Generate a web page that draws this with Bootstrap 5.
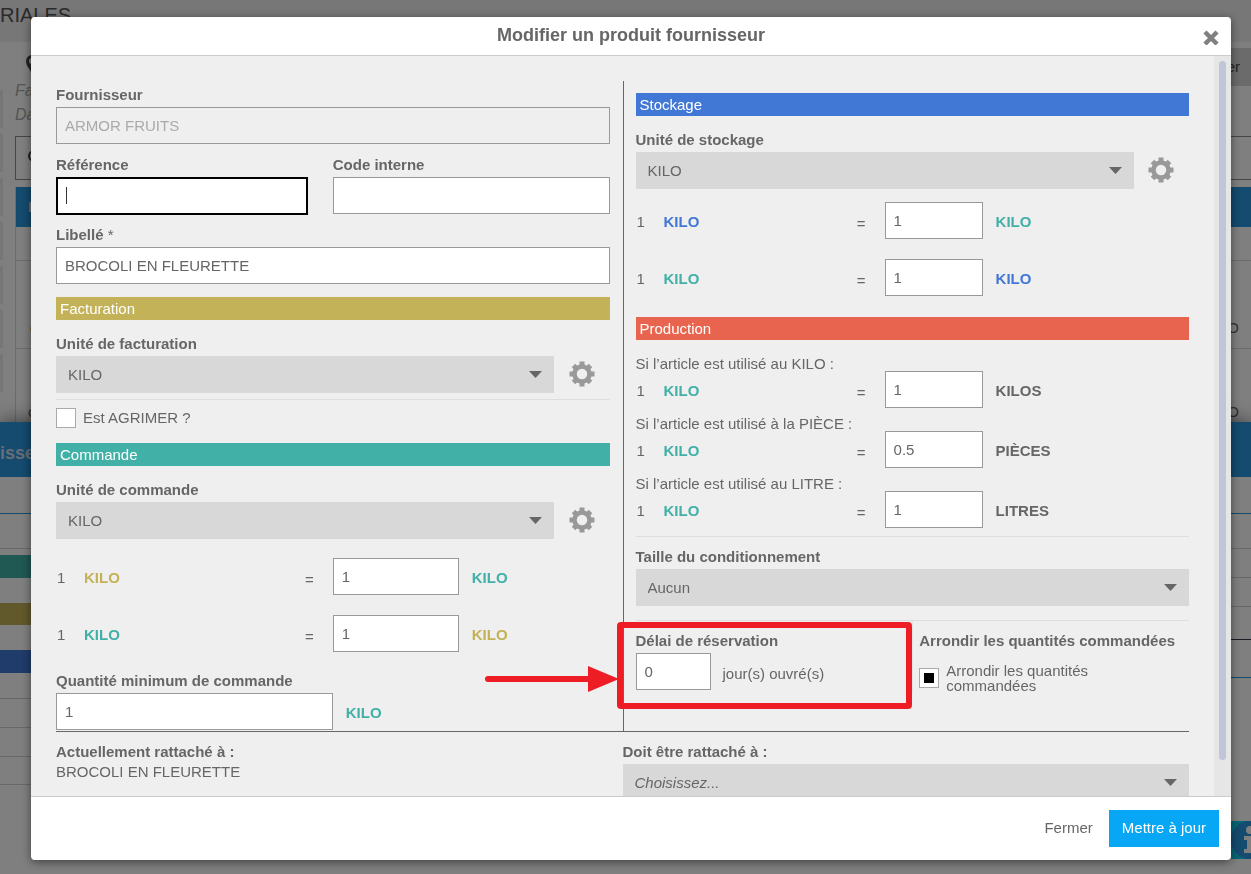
<!DOCTYPE html>
<html lang="fr">
<head>
<meta charset="utf-8">
<meta name="viewport" content="width=device-width, initial-scale=1">
<title>Modifier un produit fournisseur</title>
<link rel="stylesheet" href="https://cdn.jsdelivr.net/npm/bootstrap@5.3.0/dist/css/bootstrap.min.css">
<style>
  :root { --ink:#666; --gold:#c3b257; --teal:#41b1a8; --blue:#4178d6; --coral:#e9644e; --sky:#2896dc; }
  body { font-family:"Liberation Sans", Arial, sans-serif; font-size:15px; line-height:20px; color:var(--ink); }

  /* Page behind the dialog */
  .bg-page { height:100vh; overflow:hidden; background:#fff; }
  .bg-top { height:42px; background:#efefef; font-size:20px; line-height:30px; color:#555; }
  .bg-rail { width:3px; padding-top:48px; gap:6px; }
  .bg-rail span { height:38px; background:#ececec; }
  .bg-list { padding-left:12px; height:380px; }
  .bg-intro { font-style:italic; font-size:16px; line-height:24px; color:#aaa; }
  .bg-pin { height:37px; padding:12px 0 0 10px; }
  .bg-action { background:#d6d6d6; height:38px; margin-top:6px; padding:0 11px 0 16px; color:#444; }
  .bg-search { height:44px; margin:9px 0 7px; border:1px solid #8c8c8c; border-right:0; padding-left:11px; }
  .bg-grid { border-left:1px solid #d8d8d8; }
  .bg-grid-head { height:40px; background:var(--sky); color:#fff; padding-left:12px; }
  .bg-line { border-bottom:1px solid #d8d8d8; padding:0 12px 10px 14px; }
  .bg-sheet { box-shadow:0 0 20px rgba(0,0,0,.6); background:#fff; height:100%; }
  .bg-sheet-head { height:55px; background:var(--sky); font-size:18px; color:#c8dcec; padding-top:6px; }
  .bg-side { width:32px; }
  .bg-rule { border-bottom:1px solid #d0d0d0; }
  .bg-rule.accent { border-color:var(--sky); }
  .bg-rule.dark { border-color:#333c48; }
  .bg-info { position:absolute; right:-18px; bottom:15px; }

  /* Dialog */
  .shade { position:fixed; inset:0; background:rgba(0,0,0,.5); padding:17px 20px 14px 31px; }
  .dialog { background:#fff; border-radius:4px; box-shadow:0 2px 10px rgba(0,0,0,.5); overflow:hidden; }
  .dialog-head { height:39px; border-bottom:1px solid #ccc; }
  .dialog-head h1 { font-size:18px; line-height:36px; font-weight:700; color:var(--ink); }
  .close-x { width:20px; height:39px; margin-right:10px; }
  .dialog-body { min-height:0; background:#efefef; }
  .scroll-pane { min-height:0; overflow:hidden; padding:25px 25px 0; }
  .rail { width:17px; background:#e6e6e6; padding:5px 5px 36px; }
  .rail span { width:7px; background:#c0c5d7; border-radius:4px; }
  .dialog-foot { height:64px; border-top:1px solid #ccc; padding:0 12px 0 0; gap:3px; }

  .col-start { padding-right:13px; }
  .col-end { border-left:1px solid var(--ink); padding:12px 0 38px 12px; }
  .lbl { display:block; font-weight:700; line-height:20px; padding:4px 0 2px; white-space:nowrap; }
  .box { display:block; height:37px; border:1px solid #999; border-radius:0; padding:0 8px; background:#fff; color:var(--ink); min-width:0; }
  .box:disabled { background:#efefef; color:#aaa; }
  .box.active { border:2px solid #000; outline:0; height:38px; background:linear-gradient(#333,#333) 8px 8px / 1px 17px no-repeat #fff; }
  .pick { display:block; height:37px; border:0; border-radius:0; padding:0 36px 0 12px; color:var(--ink); appearance:none;
    background:#d8d8d8 url("data:image/svg+xml,%3Csvg xmlns='http://www.w3.org/2000/svg' width='13' height='7'%3E%3Cpath d='M0 0H13L6.500 7Z' fill='%23666'/%3E%3C/svg%3E") right 12px top 15px no-repeat; }
  .pick-90 { width:90%; }
  .gear { width:10%; padding:0; }
  .gear svg { display:block; margin:0 auto 1px; }
  .band { height:23px; line-height:23px; padding-left:4px; font-size:15px; font-weight:400; color:#fff; margin:0; }
  .thin { border-top:1px solid #dedede; }
  .mt-stack { margin-top:7px; }
  .mt-band { margin-top:13px; }
  .after-band { margin-top:10px; }
  .conv { height:37px; }
  .conv > * { flex:none; }
  .conv .from { width:50%; padding:5px 19px 0 1px; }
  .col-end .conv .from { width:45%; }
  .conv .one { width:27px; }
  .conv .box { width:126px; }
  .col-end .conv .box { width:98px; }
  .unit { font-weight:700; padding:3px 0 0 13px; }
  .from b { flex:1; }
  .from i { font-style:normal; padding-top:2px; }
  .conv-gap { margin-top:20px; }
  .hint { line-height:15px; margin:8px 0 0; }
  .tick { appearance:none; width:20px; height:20px; border:1px solid #aaa; background:#fff; margin:0; flex:none; }
  .tick:checked { background:linear-gradient(#000,#000) center / 10px 10px no-repeat #fff; }
  .c-gold { color:var(--gold); } .c-teal { color:var(--teal); } .c-blue { color:var(--blue); }
  .b-gold { background:var(--gold); } .b-teal { background:var(--teal); } .b-blue { background:var(--blue); } .b-coral { background:var(--coral); }
  .delay { position:relative; width:50%; padding-top:6px; }
  .delay .box { width:75px; }
  .round { width:50%; padding:6px 0 0 6px; border-left:1px solid #e4e4e4; }
  .frame { position:absolute; left:-19px; right:0; top:1px; height:87px; border:6px solid #ee1c25; border-radius:4px; pointer-events:none; }
  .arrow { position:absolute; right:100%; top:38px; margin-right:4px; }
  .attach { border-top:1px solid var(--ink); padding-top:6px; }
  .btn-flat { height:37px; border-radius:0; font-size:15px; padding:0 13px; color:var(--ink); }
  .btn-send, .btn-send:hover { background:#08a7f5; color:#fff; }
</style>
</head>
<body class="overflow-hidden">

<div class="bg-page d-flex flex-column position-relative" aria-hidden="true">
  <div class="bg-top flex-shrink-0">RIALES</div>
  <div class="d-flex flex-shrink-0">
    <div class="bg-rail d-flex flex-column"><span></span><span></span><span></span><span></span><span></span><span></span><span></span></div>
    <div class="bg-list flex-grow-1 d-flex flex-column">
      <div class="d-flex justify-content-between align-items-start">
        <div class="bg-intro">
          <div class="bg-pin"><svg class="d-block" width="14" height="21" viewBox="0 0 14 21"><path d="M7 1a6 6 0 0 0-6 6c0 5 4 8 6 13 2-5 6-8 6-13a6 6 0 0 0-6-6z" fill="#444"/><circle cx="7" cy="7" r="3" fill="#fff"/></svg></div>
          <div>Fa</div><div>Da</div>
        </div>
        <div class="bg-action d-flex align-items-center">er</div>
      </div>
      <div class="bg-search d-flex align-items-center"><svg width="16" height="16" viewBox="0 0 16 16"><circle cx="7" cy="6" r="5" fill="none" stroke="#444" stroke-width="2"/><path d="M10 10l5 5" stroke="#444" stroke-width="2"/></svg></div>
      <div class="bg-grid flex-grow-1 d-flex flex-column">
        <div class="bg-grid-head d-flex align-items-center">I</div>
        <div class="bg-line" style="height:34px"></div>
        <div class="bg-line d-flex align-items-end justify-content-between" style="height:88px"><span>c</span><span>O</span></div>
        <div class="d-flex align-items-end justify-content-between px-2 flex-grow-1"><span class="ps-1">c</span><span class="pe-1">O</span></div>
      </div>
    </div>
  </div>
  <div class="bg-sheet flex-grow-1 position-relative">
    <div class="bg-sheet-head d-flex align-items-center fw-bold">isse</div>
    <div class="d-flex justify-content-between">
      <div class="bg-side">
        <div class="bg-rule accent" style="height:37px"></div>
        <div class="bg-rule" style="height:35px"></div>
        <div class="b-teal" style="height:23px;margin-top:6px"></div>
        <div class="b-gold" style="height:22px;margin-top:25px"></div>
        <div class="b-blue" style="height:23px;margin-top:25px"></div>
        <div class="bg-rule" style="height:26px"></div>
        <div class="bg-rule" style="height:29px"></div>
        <div class="bg-rule" style="height:29px"></div>
        <div class="bg-rule" style="height:28px"></div>
      </div>
      <div class="bg-side">
        <div class="bg-rule accent" style="height:37px"></div>
        <div class="bg-rule" style="height:35px"></div>
        <div class="bg-rule" style="height:29px"></div>
        <div class="bg-rule" style="height:29px"></div>
        <div class="bg-rule dark" style="height:33px"></div>
        <div class="bg-rule accent" style="height:38px"></div>
      </div>
    </div>
    <svg class="bg-info" width="38" height="38" viewBox="0 0 38 38"><circle cx="19" cy="19" r="19" fill="#2896dc"/><circle cx="19" cy="9" r="4" fill="#fff"/><path d="M13 15h9v13h3v4H13v-4h3v-9h-3z" fill="#fff"/></svg>
  </div>
</div>

<div class="shade d-flex">
  <div class="dialog d-flex flex-column flex-grow-1" role="dialog" aria-labelledby="dlg-title">
    <div class="dialog-head d-flex flex-shrink-0 position-relative justify-content-end">
      <h1 id="dlg-title" class="position-absolute w-100 text-center m-0">Modifier un produit fournisseur</h1>
      <button type="button" class="close-x btn p-0 border-0 position-relative d-flex align-items-center justify-content-center" aria-label="Fermer la fenêtre">
        <svg width="16" height="16" viewBox="0 0 16 16"><path d="M3.500 4.500l9 9m0-9l-9 9" stroke="#808080" stroke-width="4.400" stroke-linecap="square"/></svg>
      </button>
    </div>

    <form class="dialog-body d-flex flex-grow-1" id="product">
      <div class="scroll-pane flex-grow-1">
        <div class="row g-0">
          <div class="col-6 col-start">
            <label class="lbl" for="supplier">Fournisseur</label>
            <input class="box w-100" id="supplier" value="ARMOR FRUITS" disabled>
            <div class="d-flex mt-stack">
              <div class="w-50" style="padding-right:25px">
                <label class="lbl" for="ref">Référence</label>
                <input class="box active w-100" id="ref">
              </div>
              <div class="w-50">
                <label class="lbl" for="code">Code interne</label>
                <input class="box w-100" id="code">
              </div>
            </div>
            <label class="lbl" style="margin-top:6px" for="name">Libellé <span class="fw-normal">*</span></label>
            <input class="box w-100" id="name" value="BROCOLI EN FLEURETTE">

            <h2 class="band b-gold mt-band">Facturation</h2>
            <label class="lbl after-band" for="bill">Unité de facturation</label>
            <div class="d-flex">
              <select class="pick pick-90" id="bill"><option>KILO</option></select>
              <button type="button" class="gear btn border-0" aria-label="Paramètres"><svg width="26" height="26"><use href="#cog"/></svg></button>
            </div>
            <div class="thin d-flex align-items-center" style="margin-top:6px;padding-top:8px;gap:7px">
              <input class="tick" type="checkbox" id="agri"><label for="agri">Est AGRIMER ?</label>
            </div>

            <h2 class="band b-teal" style="margin-top:15px">Commande</h2>
            <label class="lbl after-band" for="order">Unité de commande</label>
            <div class="d-flex">
              <select class="pick pick-90" id="order"><option>KILO</option></select>
              <button type="button" class="gear btn border-0" aria-label="Paramètres"><svg width="26" height="26"><use href="#cog"/></svg></button>
            </div>
            <div class="conv d-flex align-items-center" style="margin-top:19px">
              <div class="from d-flex"><span class="one">1</span><b class="c-gold">KILO</b><i>=</i></div>
              <input class="box" value="1" aria-label="Commande par facturation"><span class="unit c-teal">KILO</span>
            </div>
            <div class="conv conv-gap d-flex align-items-center">
              <div class="from d-flex"><span class="one">1</span><b class="c-teal">KILO</b><i>=</i></div>
              <input class="box" value="1" aria-label="Facturation par commande"><span class="unit c-gold">KILO</span>
            </div>
            <label class="lbl" style="margin-top:15px" for="minq">Quantité minimum de commande</label>
            <div class="d-flex align-items-center">
              <input class="box w-50" id="minq" value="1"><span class="unit c-teal">KILO</span>
            </div>
          </div>

          <div class="col-6 col-end">
            <h2 class="band b-blue">Stockage</h2>
            <label class="lbl after-band" for="stock">Unité de stockage</label>
            <div class="d-flex">
              <select class="pick pick-90" id="stock"><option>KILO</option></select>
              <button type="button" class="gear btn border-0" aria-label="Paramètres"><svg width="26" height="26"><use href="#cog"/></svg></button>
            </div>
            <div class="conv mt-band d-flex align-items-center">
              <div class="from d-flex"><span class="one">1</span><b class="c-blue">KILO</b><i>=</i></div>
              <input class="box" value="1" aria-label="Commande par stockage"><span class="unit c-teal">KILO</span>
            </div>
            <div class="conv conv-gap d-flex align-items-center">
              <div class="from d-flex"><span class="one">1</span><b class="c-teal">KILO</b><i>=</i></div>
              <input class="box" value="1" aria-label="Stockage par commande"><span class="unit c-blue">KILO</span>
            </div>

            <h2 class="band b-coral" style="margin-top:21px">Production</h2>
            <p class="hint" style="margin-top:16px">Si l’article est utilisé au KILO :</p>
            <div class="conv d-flex align-items-center">
              <div class="from d-flex"><span class="one">1</span><b class="c-teal">KILO</b><i>=</i></div>
              <input class="box" value="1" aria-label="Kilos"><span class="unit">KILOS</span>
            </div>
            <p class="hint">Si l’article est utilisé à la PIÈCE :</p>
            <div class="conv d-flex align-items-center">
              <div class="from d-flex"><span class="one">1</span><b class="c-teal">KILO</b><i>=</i></div>
              <input class="box" value="0.5" aria-label="Pièces"><span class="unit">PIÈCES</span>
            </div>
            <p class="hint">Si l’article est utilisé au LITRE :</p>
            <div class="conv d-flex align-items-center">
              <div class="from d-flex"><span class="one">1</span><b class="c-teal">KILO</b><i>=</i></div>
              <input class="box" value="1" aria-label="Litres"><span class="unit">LITRES</span>
            </div>
            <div class="thin" style="margin-top:8px;padding-top:6px">
              <label class="lbl" for="pack">Taille du conditionnement</label>
              <select class="pick w-100" id="pack"><option>Aucun</option></select>
            </div>
            <div class="thin d-flex" style="margin-top:14px">
              <div class="delay">
                <label class="lbl" for="delay">Délai de réservation</label>
                <div class="d-flex align-items-center">
                  <input class="box" id="delay" value="0"><span style="padding:4px 0 0 12px">jour(s) ouvré(s)</span>
                </div>
                <div class="frame"><svg class="arrow" width="134" height="26" viewBox="0 0 134 26"><path d="M3 13H108" stroke="#ee1c25" stroke-width="6" stroke-linecap="round"/><path d="M103 0L134 13L103 26Z" fill="#ee1c25"/></svg></div>
              </div>
              <div class="round">
                <span class="lbl">Arrondir les quantités commandées</span>
                <div class="d-flex align-items-center" style="gap:7px;margin-top:10px">
                  <input class="tick" type="checkbox" id="rnd" checked>
                  <label for="rnd" style="line-height:15px;width:170px">Arrondir les quantités commandées</label>
                </div>
              </div>
            </div>
          </div>
        </div>

        <div class="attach row g-0">
          <div class="col-6">
            <span class="lbl">Actuellement rattaché à :</span>
            <div style="line-height:15px">BROCOLI EN FLEURETTE</div>
          </div>
          <div class="col-6">
            <label class="lbl" for="target">Doit être rattaché à :</label>
            <select class="pick w-100 fst-italic" id="target"><option>Choisissez...</option></select>
          </div>
        </div>
      </div>
      <div class="rail d-flex flex-shrink-0"><span></span></div>
    </form>

    <div class="dialog-foot d-flex align-items-center justify-content-end flex-shrink-0">
      <button type="button" class="btn btn-flat border-0">Fermer</button>
      <button type="submit" form="product" class="btn btn-flat btn-send border-0">Mettre à jour</button>
    </div>
  </div>
</div>

<svg width="0" height="0" class="position-absolute" aria-hidden="true">
  <symbol id="cog" viewBox="0 0 26 26">
    <circle cx="13" cy="13" r="7.500" fill="none" stroke="#999" stroke-width="4.500"/>
    <g stroke="#999" stroke-width="5"><path d="M13 .5v4M13 21.500v4M.5 13h4M21.500 13h4"/><path d="M4.500 4.500l3 3M18.500 18.500l3 3M21.500 4.500l-3 3M4.500 21.500l3-3"/></g>
  </symbol>
</svg>
<script src="https://cdn.jsdelivr.net/npm/bootstrap@5.3.0/dist/js/bootstrap.bundle.min.js"></script>
</body>
</html>
